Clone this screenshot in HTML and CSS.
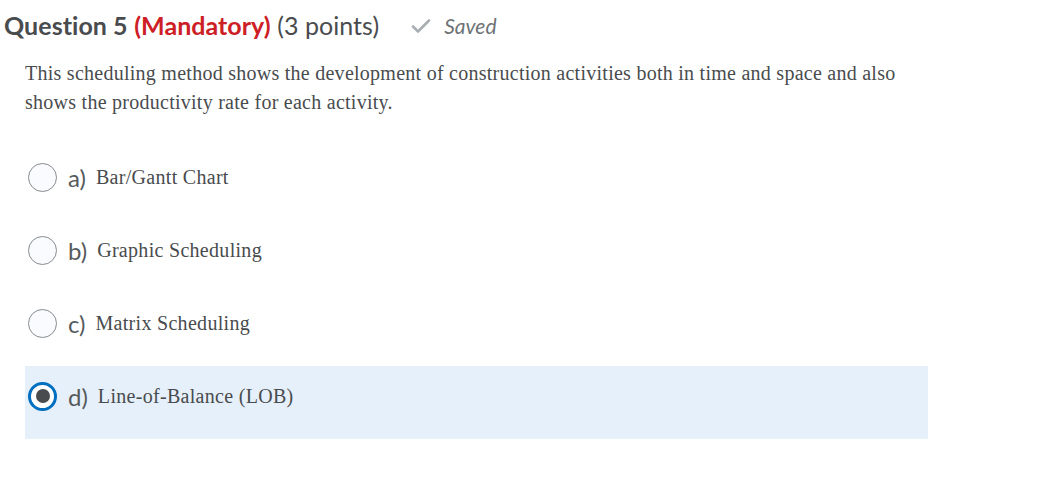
FILE: index.html
```html
<!DOCTYPE html>
<html>
<head>
<meta charset="utf-8">
<link rel="stylesheet" href="styles.css">
</head>
<body>
<div class="page">
  <div class="header">
    <h2 class="title"><span class="qnum">Question 5</span> <span class="mand">(Mandatory)</span> <span class="pts">(3 points)</span></h2>
    <div class="saved">
      <svg class="check" width="20" height="16" viewBox="0 0 20 16"><path d="M2 8.5 L7 13.5 L18 2.5" fill="none" stroke="#a8aeb2" stroke-width="2.6" stroke-linecap="round" stroke-linejoin="round"/></svg>
      <span>Saved</span>
    </div>
  </div>
  <p class="prompt">This scheduling method shows the development of construction activities both in time and space and also shows the productivity rate for each activity.</p>
  <div class="options">
    <div class="opt"><span class="radio"></span><span class="letter">a)</span><span class="otext">Bar/Gantt Chart</span></div>
    <div class="opt"><span class="radio"></span><span class="letter">b)</span><span class="otext">Graphic Scheduling</span></div>
    <div class="opt"><span class="radio"></span><span class="letter">c)</span><span class="otext">Matrix Scheduling</span></div>
    <div class="opt selected"><span class="radio checked"></span><span class="letter">d)</span><span class="otext">Line-of-Balance (LOB)</span></div>
  </div>
</div>
</body>
</html>
```
FILE: styles.css
```css
html, body { margin: 0; padding: 0; background: #fff; }
.page { width: 1063px; color: #494c4e; }
.header { display: flex; align-items: center; height: 50px; padding-left: 4px; }
.title { margin: 0; font-family: Lato, sans-serif; font-size: 25px; font-weight: 400; color: #494c4e; letter-spacing: 0.05px; }
.qnum { font-weight: 700; }
.mand { font-weight: 700; color: #cd2026; }
.saved { display: flex; align-items: center; margin-left: 32px; font-family: Lato, sans-serif; font-style: italic; font-size: 21px; color: #6e7376; gap: 13px; }
.check { margin-top: 1px; }
.prompt { margin: 9px 0 0 25px; width: 900px; font-family: "Liberation Serif", serif; font-size: 20px; letter-spacing: 0.26px; line-height: 29px; color: #494c4e; }
.options { margin-top: 30px; padding-left: 25px; width: 903px; }
.opt { display: flex; align-items: center; height: 60px; padding: 0 0 13px 3px; }
.radio { width: 29px; height: 29px; border: 1px solid #868c8f; border-radius: 50%; background: #f9fbff; box-sizing: border-box; flex: none; }
.radio.checked { border: 3px solid #006fbf; background: #fff; display: flex; align-items: center; justify-content: center; }
.radio.checked::after { content: ""; width: 14px; height: 14px; border-radius: 50%; background: #494c4e; }
.letter { font-family: Lato, sans-serif; font-size: 24px; margin-left: 11px; color: #565a5c; }
.otext { font-family: "Liberation Serif", serif; font-size: 20px; letter-spacing: 0.3px; margin-left: 10px; }
.selected { background: #e6f0fa; }
```
